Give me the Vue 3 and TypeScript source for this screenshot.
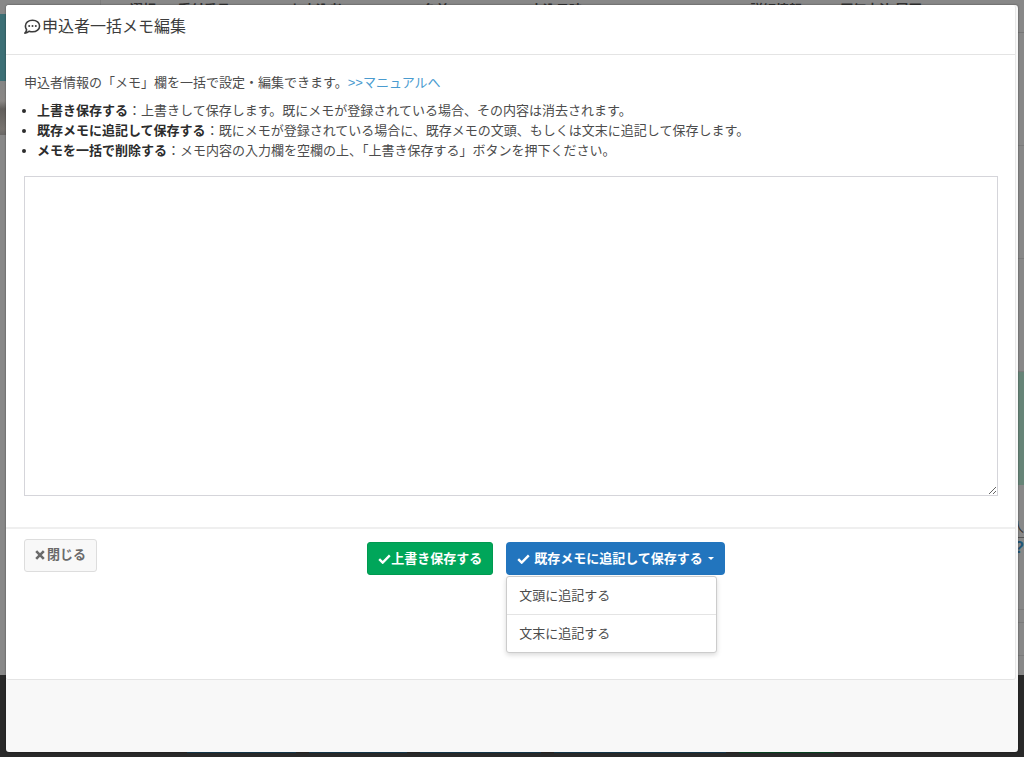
<script setup lang="ts">
import { ref } from 'vue'

const memo = ref<string>('')
const menuOpen = ref<boolean>(true)

const columns: string[] = ['選択', '受付番号', 'お申込者', '名前', '申込日時', '詳細情報', '原価方法/履歴']
const notes: { term: string; text: string }[] = [
  { term: '上書き保存する', text: '上書きして保存します。既にメモが登録されている場合、その内容は消去されます。' },
  { term: '既存メモに追記して保存する', text: '既にメモが登録されている場合に、既存メモの文頭、もしくは文末に追記して保存します。' },
  { term: 'メモを一括で削除する', text: 'メモ内容の入力欄を空欄の上、「上書き保存する」ボタンを押下ください。' },
]
const appendOptions: string[] = ['文頭に追記する', '文末に追記する']
</script>

<template>
  <div class="page">
    <div class="backdrop" aria-hidden="true">
      <div class="back-main">
        <div class="back-side">
          <div class="side-banner"></div>
          <div class="side-photo"></div>
        </div>
        <div class="back-table">
          <div class="back-head">
            <span v-for="(c, i) in columns" :key="c" :class="'col-' + i">{{ c }}</span>
          </div>
          <div class="back-row"></div>
          <div class="back-row"></div>
          <div class="back-row"></div>
          <div class="back-row selected"></div>
          <div class="back-row tail"><span class="more">入</span><b>?</b></div>
          <div class="back-row thin"></div>
          <div class="back-row short"></div>
        </div>
      </div>
      <div class="back-bar">
        <i class="b1"></i><i class="b2"></i><i class="b3"></i><i class="b4"></i><i class="b5"></i>
      </div>
    </div>

    <section class="modal" role="dialog" aria-labelledby="dialog-title">
      <div class="panel">
        <header class="modal-head">
          <svg class="bubble" viewBox="0 0 18 16" aria-hidden="true">
            <path d="M8.500 1.300c4.100 0 7.100 2.500 7.100 5.700s-3 5.800-7.100 5.800c-1.200 0-2.300-.2-3.200-.6-1.100.9-2.600 1.800-4.400 1.900.9-1 1.500-2.100 1.700-3.300C1.800 9.700 1.400 8.400 1.400 7c0-3.200 3-5.700 7.100-5.700z" fill="none" stroke="currentColor" stroke-width="1.600" stroke-linejoin="round" />
            <circle cx="5.200" cy="7" r="1" /><circle cx="8.500" cy="7" r="1" /><circle cx="11.800" cy="7" r="1" />
          </svg>
          <h1 id="dialog-title">申込者一括メモ編集</h1>
        </header>

        <div class="modal-body">
          <p id="memo-help">申込者情報の「メモ」欄を一括で設定・編集できます。<a href="#manual">&gt;&gt;マニュアルへ</a></p>
          <ul>
            <li v-for="n in notes" :key="n.term"><strong>{{ n.term }}</strong>：{{ n.text }}</li>
          </ul>
          <textarea v-model="memo" aria-labelledby="dialog-title" aria-describedby="memo-help"></textarea>
        </div>

        <footer class="modal-foot">
          <button type="button" class="btn close">
            <svg class="cross" viewBox="0 0 10 10" aria-hidden="true"><path d="M1.200 1.200l7.600 7.600M8.800 1.200l-7.600 7.600" stroke="currentColor" stroke-width="2.600" /></svg>閉じる
          </button>
          <div class="actions">
            <button type="button" class="btn save">
              <svg class="check" viewBox="0 0 13 10" aria-hidden="true"><path d="M1.200 5.200l3.500 3.400 7.100-7.200" fill="none" stroke="currentColor" stroke-width="2.400" /></svg>上書き保存する
            </button>
            <div class="dropdown">
              <button type="button" class="btn append" :aria-expanded="menuOpen" @click="menuOpen = !menuOpen">
                <svg class="check" viewBox="0 0 13 10" aria-hidden="true"><path d="M1.200 5.200l3.500 3.400 7.100-7.200" fill="none" stroke="currentColor" stroke-width="2.400" /></svg>
                <span>既存メモに追記して保存する</span>
                <svg class="caret" viewBox="0 0 6 3" aria-hidden="true"><path d="M0 0h6L3 3z" fill="currentColor" /></svg>
              </button>
              <ul v-if="menuOpen" class="menu">
                <li v-for="o in appendOptions" :key="o"><button type="button">{{ o }}</button></li>
              </ul>
            </div>
          </div>
        </footer>
      </div>
    </section>
  </div>
</template>

<style>
body {
  margin: 0;
}
</style>

<style scoped>
* {
  box-sizing: border-box;
}
.page {
  display: grid;
  min-height: 100vh;
  font-family: "Liberation Sans", "Noto Sans CJK JP", sans-serif;
  font-size: 13px;
  line-height: 20px;
  color: #4c4c4c;
}
.backdrop,
.modal {
  grid-area: 1 / 1;
  min-width: 0;
}
.backdrop {
  display: flex;
  flex-direction: column;
  background: #888;
}
.back-main {
  display: flex;
  flex: 1;
}
.back-side {
  width: 101px;
  padding-top: 14px;
  border-right: 1px solid #7c7c7c;
}
.side-banner {
  height: 67px;
  background: #3c6f75;
}
.side-photo {
  height: 54px;
  background: linear-gradient(#858585, #8a8785 20px, #625f5c 28px, #77736f 48px, #696766);
}
.back-table {
  flex: 1;
  min-width: 0;
}
.back-head {
  display: flex;
  height: 33px;
  padding: 0 0 0 29px;
  border-bottom: 1px solid #777;
  color: #333;
  font-weight: bold;
  line-height: 20px;
  white-space: nowrap;
}
.col-0 { width: 48px; }
.col-1 { width: 112px; }
.col-2 { width: 133px; }
.col-3 { width: 107px; }
.col-4 { width: 220px; }
.col-5 { width: 90px; }
.back-row {
  height: 113px;
  border-bottom: 1px solid #7b7b7b;
}
.back-row.selected {
  border: 0;
  background: #668477;
}
.back-row.tail {
  display: flex;
  flex-direction: column;
  align-items: flex-end;
  height: 125px;
  padding-top: 32px;
  color: #333;
}
.more {
  border-bottom: 1px solid #555;
}
.tail b {
  color: #205676;
  font-size: 16px;
}
.back-row.thin { height: 13px; }
.back-row.short { height: 33px; }
.back-bar {
  display: flex;
  height: 82px;
  padding: 0 190px 4px 187px;
  gap: 13px;
  background: #292929;
}
.back-bar i {
  flex: 109;
  background: #173e54;
}
.back-bar .b2 { flex: 98; }
.back-bar .b3 { flex: 121; }
.back-bar .b4 { flex: 172; }
.back-bar .b5 { flex: 95; background: #074a26; }
.modal {
  z-index: 1;
  margin: 5px 6px;
  padding-right: 2px;
  border-radius: 3px;
  background: #f8f8f8;
  box-shadow: 0 0 2px rgba(0, 0, 0, 0.5);
}
.panel {
  background: #fff;
  border-right: 1px solid #e8e8e8;
  border-bottom: 1px solid #e4e4e4;
  border-radius: 3px;
}
.modal-head {
  display: flex;
  align-items: center;
  height: 50px;
  padding: 0 18px 6px;
  border-bottom: 1px solid #e4e4e4;
  color: #3c3c3c;
}
.bubble {
  width: 18px;
  height: 16px;
  fill: currentColor;
}
h1 {
  margin: 0;
  font-size: 16px;
  font-weight: normal;
  line-height: 24px;
}
.modal-body {
  padding: 18px 17px 31px 18px;
}
p {
  margin: 0 0 8px;
}
p a {
  color: #4a9bcf;
  text-decoration: none;
}
.modal-body ul {
  margin: 0 0 15px;
  padding-left: 13px;
}
.modal-body li::marker {
  color: #2c2c2c;
}
strong {
  color: #2c2c2c;
}
textarea {
  display: block;
  width: 100%;
  height: 320px;
  padding: 6px 12px;
  border: 1px solid #d5d5da;
  border-radius: 0;
  background: #fff;
  color: inherit;
  font: inherit;
  resize: both;
  outline: 0;
}
.modal-foot {
  display: flex;
  align-items: flex-start;
  min-height: 152px;
  padding: 10px 20px 0 18px;
  border-top: 2px solid #efefef;
}
.btn {
  display: inline-flex;
  align-items: center;
  justify-content: center;
  height: 33px;
  padding: 0 10px;
  border: 1px solid transparent;
  border-radius: 3px;
  color: #fff;
  font: inherit;
  font-weight: bold;
  white-space: nowrap;
}
.btn.close {
  padding-bottom: 2px;
  border-color: #ddd;
  background: #f8f8f8;
  color: #6a6a6a;
}
.cross {
  width: 10px;
  height: 10px;
  margin-right: 2px;
}
.actions {
  display: flex;
  flex: 1;
  justify-content: center;
  gap: 13px;
  padding-top: 3px;
}
.check {
  width: 13px;
  height: 10px;
}
.save {
  background: #00a65a;
  border-color: #009a50;
}
.dropdown {
  position: relative;
}
.append {
  background: #2275be;
  border-radius: 4px;
}
.append span {
  margin: 0 5px 0 4px;
}
.caret {
  width: 6px;
  height: 3px;
}
.menu {
  position: absolute;
  top: 100%;
  left: 0;
  width: 211px;
  margin: 1px 0 0;
  padding: 0;
  border: 1px solid #ccc;
  border-radius: 3px;
  background: #fff;
  box-shadow: 0 2px 5px rgba(0, 0, 0, 0.15);
  list-style: none;
}
.menu li + li {
  border-top: 1px solid #e4e4e4;
}
.menu button {
  display: block;
  width: 100%;
  height: 37px;
  padding: 0 12px;
  border: 0;
  background: none;
  color: #4c4c4c;
  font: inherit;
  text-align: left;
}
</style>
